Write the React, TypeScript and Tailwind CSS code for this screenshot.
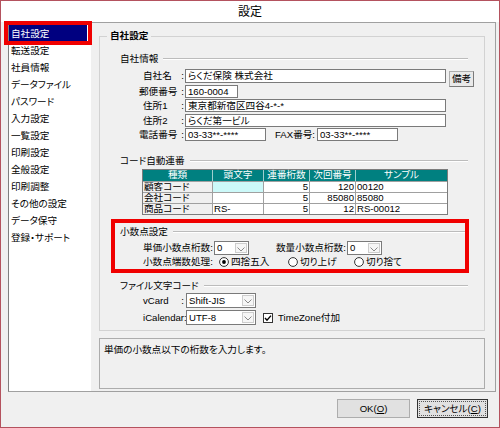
import React from 'react';

const menu = [
  '自社設定',
  '転送設定',
  '社員情報',
  'データファイル',
  'パスワード',
  '入力設定',
  '一覧設定',
  '印刷設定',
  '全般設定',
  '印刷調整',
  'その他の設定',
  'データ保守',
  '登録・サポート',
];

const codeRows = [
  { kind: '顧客コード', prefix: '', digits: '5', next: '120', sample: '00120', cyan: true },
  { kind: '会社コード', prefix: '', digits: '5', next: '85080', sample: '85080', cyan: false },
  { kind: '商品コード', prefix: 'RS-', digits: '5', next: '12', sample: 'RS-00012', cyan: false },
];

function Chevron() {
  return (
    <svg width="8" height="5" viewBox="0 0 8 5">
      <polyline points="0.5,0.5 4,4 7.5,0.5" fill="none" stroke="#8a8a8a" strokeWidth="1" />
    </svg>
  );
}

function Radio({ checked }: { checked?: boolean }) {
  return (
    <svg width="10" height="10" viewBox="0 0 10 10" className="shrink-0">
      <circle cx="5" cy="5" r="4.4" fill="#fff" stroke="#333" strokeWidth="1" />
      {checked && <circle cx="5" cy="5" r="1.9" fill="#000" />}
    </svg>
  );
}

function SectionHead({ title }: { title: string }) {
  return (
    <div className="h-[14px] flex items-center gap-[5px]">
      <span>{title}</span>
      <div className="flex-1 h-[2px] border-t border-[#bcbcbc] border-b border-b-white" />
    </div>
  );
}

function Field({ text, className }: { text?: string; className: string }) {
  return (
    <div className={`${className} h-full border border-[#7a7a7a] bg-white flex items-center pl-[2px] whitespace-nowrap overflow-hidden`}>
      {text}
    </div>
  );
}

function Combo({ value, className }: { value: string; className: string }) {
  return (
    <div className={`${className} h-full border border-[#7a7a7a] bg-white flex`}>
      <span className="flex-1 flex items-center pl-[2px]">{value}</span>
      <span className="w-[12px] m-px border border-[#cdcdcd] bg-[#f6f6f6] flex items-center justify-center pt-[2px]">
        <Chevron />
      </span>
    </div>
  );
}

function RowLabel({ text, indent }: { text: string; indent?: boolean }) {
  return (
    <div className="w-[46px] shrink-0 flex justify-between items-center">
      <span className={indent ? 'pl-[4px]' : ''}>{text}</span>
      <span className="pr-[1px]">:</span>
    </div>
  );
}

function Sidebar() {
  return (
    <div className="w-[82px] shrink-0 bg-white pt-[2px] flex flex-col">
      {menu.map((m, i) => (
        <div
          key={m}
          className={
            i === 0
              ? 'h-[17px] w-[78px] flex items-center pl-[2px] bg-[#000080] text-white'
              : 'h-[17px] w-[78px] flex items-center pl-[2px]'
          }
        >
          {m}
        </div>
      ))}
    </div>
  );
}

function CodeTable() {
  return (
    <div className="ml-[22px] mt-px w-[306px] border border-[#7c7c7c] flex flex-col leading-[10px]">
      <div className="h-[11px] flex bg-[#008080] text-white">
        <div className="w-[70px] border-r border-[#9fcfcf] text-center">種類</div>
        <div className="w-[51px] border-r border-[#9fcfcf] text-center">頭文字</div>
        <div className="w-[46px] border-r border-[#9fcfcf] text-center">連番桁数</div>
        <div className="w-[46px] border-r border-[#9fcfcf] text-center">次回番号</div>
        <div className="flex-1 text-center">サンプル</div>
      </div>
      {codeRows.map(r => (
        <div key={r.kind} className="h-[11px] flex border-t border-[#a0a0a0]">
          <div className="w-[70px] border-r border-[#a0a0a0] bg-[#f0f0f0] pl-px">{r.kind}</div>
          <div className={r.cyan ? 'w-[51px] border-r border-[#a0a0a0] bg-[#ccf9f9] pl-px' : 'w-[51px] border-r border-[#a0a0a0] bg-white pl-px'}>
            {r.prefix}
          </div>
          <div className="w-[46px] border-r border-[#a0a0a0] bg-white text-right pr-px">{r.digits}</div>
          <div className="w-[46px] border-r border-[#a0a0a0] bg-white text-right pr-px">{r.next}</div>
          <div className="flex-1 bg-white pl-px">{r.sample}</div>
        </div>
      ))}
    </div>
  );
}

export default function App() {
  return (
    <div className="relative w-[500px] h-[428px] border border-[#b4525e] bg-white flex flex-col text-[9.6px] leading-none text-black font-['Liberation_Sans','Noto_Sans_CJK_JP',sans-serif] [font-feature-settings:'palt'] select-none">
      {/* title bar */}
      <div className="h-[21px] shrink-0 flex items-center justify-center text-[12px] pt-px">設定</div>

      <div className="flex-1 bg-[#f0f0f0] flex flex-col">
        {/* main frame */}
        <div className="ml-[7px] mr-[3px] h-[370px] shrink-0 border border-[#a0a0a0] border-l-[#7f7f7f] flex">
          <Sidebar />

          <div className="flex-1 flex flex-col pl-[8px] pt-[6px]">
            <fieldset className="w-[386px] m-0 p-0 min-w-0 border border-[#d2d2d2]">
              <legend className="ml-[7px] px-[3px] h-[14px] leading-[14px] font-bold">自社設定</legend>

              <div className="pl-[20px] pr-[16px] pb-[5px] flex flex-col">
                <div className="mt-[9px]">
                  <SectionHead title="自社情報" />
                </div>

                <div className="mt-[3px] h-[14px] flex items-start pl-[19px]">
                  <div className="h-full flex">
                    <RowLabel text="自社名" indent />
                    <Field className="w-[261px]" text="らくだ保険 株式会社" />
                  </div>
                  <button className="ml-[3px] mt-[2px] w-[25px] h-[16px] shrink-0 border border-[#adadad] border-r-[#7a7a7a] border-b-[#7a7a7a] bg-[#e9e9e9] flex items-center justify-center">
                    備考
                  </button>
                </div>

                <div className="mt-[2px] h-[13px] flex pl-[19px]">
                  <RowLabel text="郵便番号" />
                  <Field className="w-[53px]" text="160-0004" />
                </div>

                <div className="mt-px h-[13px] flex pl-[19px]">
                  <RowLabel text="住所1" indent />
                  <Field className="w-[261px]" text="東京都新宿区四谷4-*-*" />
                </div>

                <div className="mt-[2px] h-[13px] flex pl-[19px]">
                  <RowLabel text="住所2" indent />
                  <Field className="w-[261px]" text="らくだ第一ビル" />
                </div>

                <div className="mt-px h-[13px] flex pl-[19px]">
                  <RowLabel text="電話番号" />
                  <Field className="w-[81px]" text="03-33**-****" />
                  <span className="ml-[9px] w-[42px] flex items-center">FAX番号:</span>
                  <Field className="w-[81px]" text="03-33**-****" />
                </div>

                <div className="mt-[13px]">
                  <SectionHead title="コード自動連番" />
                </div>

                <CodeTable />

                <div className="mt-[10px]">
                  <SectionHead title="小数点設定" />
                </div>

                <div className="mt-[2px] h-[14px] flex pl-[23px]">
                  <span className="w-[71px] flex items-center">単価小数点桁数:</span>
                  <Combo className="w-[35px]" value="0" />
                  <span className="ml-[27px] w-[71px] flex items-center">数量小数点桁数:</span>
                  <Combo className="w-[35px]" value="0" />
                </div>

                <div className="h-[14px] flex items-center pl-[23px]">
                  <span className="w-[71px]">小数点端数処理:</span>
                  <div className="ml-[5px] w-[69px] flex items-center gap-[2px]">
                    <Radio checked />
                    <span>四捨五入</span>
                  </div>
                  <div className="w-[66px] flex items-center gap-[2px]">
                    <Radio />
                    <span>切り上げ</span>
                  </div>
                  <div className="flex items-center gap-[2px]">
                    <Radio />
                    <span>切り捨て</span>
                  </div>
                </div>

                <div className="mt-[10px]">
                  <SectionHead title="ファイル文字コード" />
                </div>

                <div className="h-[15px] flex pl-[23px]">
                  <div className="w-[43px] flex justify-between items-center">
                    <span>vCard</span>
                    <span className="pr-[2px]">:</span>
                  </div>
                  <Combo className="w-[70px]" value="Shift-JIS" />
                </div>

                <div className="mt-[2px] h-[15px] flex items-center pl-[23px]">
                  <span className="w-[43px]">iCalendar:</span>
                  <div className="h-full flex">
                    <Combo className="w-[70px]" value="UTF-8" />
                  </div>
                  <svg width="10" height="10" viewBox="0 0 10 10" className="ml-[7px] shrink-0">
                    <rect x="0.5" y="0.5" width="9" height="9" fill="#fff" stroke="#333" />
                    <polyline points="2,5 4,7.3 8,2.6" fill="none" stroke="#000" strokeWidth="1.4" />
                  </svg>
                  <span className="ml-[5px]">TimeZone付加</span>
                </div>
              </div>
            </fieldset>

            {/* description */}
            <div className="mt-[7px] w-[386px] h-[51px] border border-[#acacac] pl-[4px] pt-[6px]">
              単価の小数点以下の桁数を入力します。
            </div>
          </div>
        </div>

        {/* buttons */}
        <div className="flex-1 flex justify-end items-start pt-[7px] pr-[11px] gap-[7px]">
          <button className="w-[73px] h-[19px] border border-[#adadad] bg-[#e1e1e1] flex items-center justify-center">
            OK(<span className="underline">O</span>)
          </button>
          <button className="w-[71px] h-[19px] border border-[#333] bg-[#e1e1e1] p-px">
            <span className="w-full h-full border border-dotted border-[#555] flex items-center justify-center">
              キャンセル(<span className="underline">C</span>)
            </span>
          </button>
        </div>
      </div>

      {/* red annotation boxes */}
      <div className="absolute left-[3px] top-[20px] w-[88px] h-[24px] border-4 border-[#f00000] pointer-events-none" />
      <div className="absolute left-[110px] top-[218px] w-[358px] h-[54px] border-4 border-[#f00000] pointer-events-none" />
    </div>
  );
}
